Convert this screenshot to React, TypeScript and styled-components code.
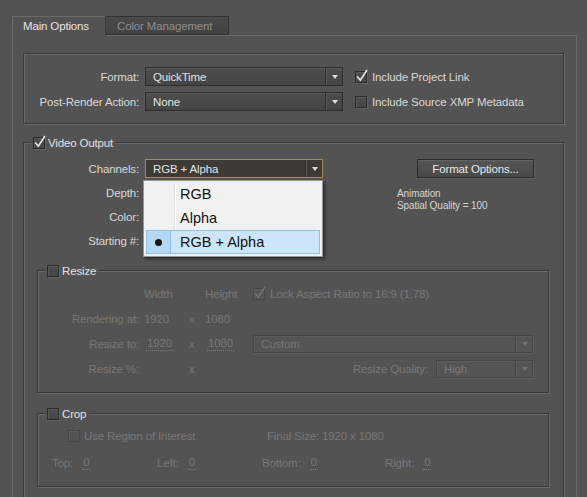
import React from "react";
import styled, { createGlobalStyle, css } from "styled-components";

const DARK = "#3a3a3a";
const LIGHT = "#6a6a6a";
const DIS = "#777777";

const GlobalStyle = createGlobalStyle`
  html, body { margin: 0; padding: 0; background: #535353; }
  body {
    font-family: "Liberation Sans", Arial, sans-serif;
    font-size: 11.5px;
    letter-spacing: -0.15px;
    color: #d8d8d8;
  }
  * { box-sizing: border-box; }
`;

const etched = css`
  border: 1px solid ${DARK};
  box-shadow: inset 1px 1px 0 ${LIGHT}, 1px 1px 0 ${LIGHT};
`;

const Page = styled.div`
  width: 587px;
  height: 497px;
  overflow: hidden;
  padding: 16px 10px 0 12px;
  display: flex;
  flex-direction: column;
`;

const TabBar = styled.div`
  display: flex;
  height: 19px;
`;

const Tab = styled.div<{ $active?: boolean }>`
  display: flex;
  align-items: center;
  white-space: nowrap;
  ${(p) =>
    p.$active
      ? css`
          position: relative;
          z-index: 1;
          width: 94px;
          height: 20px;
          padding: 0 0 1px 10px;
          background: #535353;
          border: 1px solid ${LIGHT};
          border-bottom: none;
          border-right-color: #3c3c3c;
          color: #e2e2e2;
        `
      : css`
          width: 123px;
          height: 19px;
          padding-left: 11px;
          background: linear-gradient(#4a4a4a, #424242);
          border: 1px solid #323232;
          border-left: none;
          color: #8e8e8e;
        `}
`;

const Panel = styled.div`
  flex: 1;
  border: 1px solid ${LIGHT};
  border-bottom: none;
  padding: 17px 12px 0 10px;
`;

const TopGroup = styled.div`
  ${etched};
  height: 71px;
  padding: 13px 0 12px 0;
  display: grid;
  grid-template-columns: 115px 198px auto;
  grid-auto-rows: 19px;
  column-gap: 6px;
  row-gap: 6px;
  align-items: center;
`;

const Label = styled.span<{ $dis?: boolean }>`
  text-align: right;
  white-space: nowrap;
  color: ${(p) => (p.$dis ? DIS : "#d8d8d8")};
`;

const Text = styled.span<{ $dis?: boolean }>`
  white-space: nowrap;
  color: ${(p) => (p.$dis ? DIS : "#d8d8d8")};
`;

/* ---------- select ---------- */
type SelState = "normal" | "focus" | "disabled";

const SelectBox = styled.div<{ $w: number; $h: number; $state: SelState }>`
  position: relative;
  width: ${(p) => p.$w}px;
  height: ${(p) => p.$h}px;
  display: flex;
  align-items: stretch;
  white-space: nowrap;
  ${(p) =>
    p.$state === "focus"
      ? css`
          border: 1px solid #a3895b;
          background: #3e3b37;
          color: #e4e4e4;
        `
      : p.$state === "disabled"
      ? css`
          border: 1px solid #474747;
          background: #545454;
          box-shadow: inset 1px 1px 0 #5c5c5c, 1px 1px 0 #5e5e5e;
          color: ${DIS};
        `
      : css`
          border: 1px solid #2f2f2f;
          background: linear-gradient(#4d4d4d, #454545);
          box-shadow: inset 0 1px 0 #595959;
          color: #e2e2e2;
        `}
`;

const SelectValue = styled.span`
  flex: 1;
  display: flex;
  align-items: center;
  padding-left: 7px;
  overflow: hidden;
`;

const ArrowCell = styled.span<{ $state: SelState }>`
  width: 17px;
  flex: none;
  display: flex;
  align-items: center;
  justify-content: center;
  border-left: 1px solid ${(p) => (p.$state === "disabled" ? "#474747" : "#2e2e2e")};
  box-shadow: inset 1px 0 0 ${(p) => (p.$state === "disabled" ? "#5c5c5c" : "#5a5a5a")};
`;

const Arrow = styled.span<{ $dis?: boolean }>`
  width: 0;
  height: 0;
  margin-left: 1px;
  border-left: 3.5px solid transparent;
  border-right: 3.5px solid transparent;
  border-top: 4px solid ${(p) => (p.$dis ? "#737373" : "#dedede")};
`;

function Select({
  width,
  value,
  state = "normal",
  h = 19,
}: {
  width: number;
  value: string;
  state?: SelState;
  h?: number;
}) {
  return (
    <SelectBox $w={width} $h={h} $state={state}>
      <SelectValue>{value}</SelectValue>
      <ArrowCell $state={state}>
        <Arrow $dis={state === "disabled"} />
      </ArrowCell>
    </SelectBox>
  );
}

/* ---------- checkbox ---------- */
const Box = styled.span<{ $dis?: boolean }>`
  position: relative;
  flex: none;
  width: 12px;
  height: 12px;
  border: 1px solid ${(p) => (p.$dis ? "#474747" : "#2c2c2c")};
  background: ${(p) => (p.$dis ? "#555555" : "linear-gradient(#4e4e4e, #464646)")};
  box-shadow: ${(p) =>
    p.$dis ? "inset 1px 1px 0 #5d5d5d" : "inset 1px 1px 0 #585858, 1px 1px 0 #626262"};
`;

const Tick = styled.svg`
  position: absolute;
  left: 0px;
  top: -3px;
  overflow: visible;
`;

function CheckBox({ checked, dis }: { checked?: boolean; dis?: boolean }) {
  return (
    <Box $dis={dis}>
      {checked && (
        <Tick width="12" height="13" viewBox="0 0 12 13">
          <path
            d="M1.2 7.6 L4.3 11.2 L11 1"
            fill="none"
            stroke={dis ? "#747474" : "#e8e8e8"}
            strokeWidth="1.6"
          />
        </Tick>
      )}
    </Box>
  );
}

const CheckRow = styled.span<{ $indent?: number }>`
  display: flex;
  align-items: center;
  gap: 5px;
  margin-left: ${(p) => p.$indent ?? 0}px;
  white-space: nowrap;
`;

/* ---------- group boxes ---------- */
const Group = styled.fieldset<{ $pad: string; $mt: number }>`
  ${etched};
  margin: ${(p) => p.$mt}px 0 0 0;
  padding: ${(p) => p.$pad};
  min-width: 0;
`;

const Legend = styled.legend<{ $x: number }>`
  margin-left: ${(p) => p.$x}px;
  height: 13px;
  padding: 0 3px 0 2px;
  display: flex;
  align-items: center;
  gap: 3px;
  background: #535353;
  color: #e2e2e2;
  white-space: nowrap;
`;

/* ---------- video output fields ---------- */
const FieldsArea = styled.div`
  display: flex;
  align-items: flex-start;
`;

const FieldGrid = styled.div`
  display: grid;
  grid-template-columns: 102px 178px;
  grid-auto-rows: 19px;
  column-gap: 6px;
  row-gap: 5px;
  align-items: center;
`;

const Anchor = styled.div`
  position: relative;
`;

const SideColumn = styled.div`
  margin-left: auto;
  margin-right: 15px;
  width: 137px;
  display: flex;
  flex-direction: column;
  align-items: flex-end;
`;

const Button = styled.button`
  width: 117px;
  height: 19px;
  padding: 0;
  font: inherit;
  letter-spacing: inherit;
  color: #e8e8e8;
  border: 1px solid #2c2c2c;
  background: linear-gradient(#565656, #484848);
  box-shadow: inset 0 1px 0 #626262, 1px 1px 0 #5e5e5e;
`;

const Info = styled.div`
  align-self: flex-start;
  margin-top: 10px;
  font-size: 10px;
  line-height: 12px;
  letter-spacing: -0.1px;
  color: #d6d6d6;
`;

const StartRow = styled.div`
  display: flex;
  align-items: center;
  gap: 5px;
  white-space: nowrap;
`;

const FieldValue = styled.span<{ $w: number }>`
  width: ${(p) => p.$w}px;
  height: 17px;
  border-bottom: 1px dotted #8a8a8a;
`;

/* ---------- dropdown menu ---------- */
const Menu = styled.div`
  position: absolute;
  z-index: 5;
  left: -2px;
  top: calc(100% + 2px);
  width: 180px;
  padding: 1px 0 2px 2px;
  background: #f1f1f1;
  border: 1px solid #979797;
  box-shadow: 2px 2px 3px rgba(0, 0, 0, 0.5);
  font-size: 14.5px;
  letter-spacing: 0;
  color: #111111;
`;

const MenuItem = styled.div<{ $sel?: boolean }>`
  height: 24px;
  margin-right: 2px;
  display: flex;
  align-items: stretch;
  border: 1px solid ${(p) => (p.$sel ? "#8fc1e9" : "transparent")};
  background: ${(p) => (p.$sel ? "#cde5f8" : "transparent")};
`;

const Gutter = styled.span<{ $sel?: boolean }>`
  width: 24px;
  flex: none;
  display: flex;
  align-items: center;
  justify-content: center;
  background: ${(p) => (p.$sel ? "#b4d7f3" : "transparent")};
  border-right: 1px solid ${(p) => (p.$sel ? "#8fc1e9" : "transparent")};
`;

const Bullet = styled.span`
  width: 7px;
  height: 7px;
  border-radius: 50%;
  background: #151515;
`;

const ItemText = styled.span<{ $sel?: boolean }>`
  flex: 1;
  display: flex;
  align-items: center;
  margin-left: 3px;
  padding-left: 5px;
  border-left: 1px solid ${(p) => (p.$sel ? "transparent" : "#dedede")};
  box-shadow: ${(p) => (p.$sel ? "none" : "inset 1px 0 0 #ffffff")};
`;

/* ---------- resize ---------- */
const ResizeGrid = styled.div`
  display: grid;
  grid-template-columns: 101px 40px 11px 43px 280px;
  grid-auto-rows: 18px;
  column-gap: 5px;
  row-gap: 7px;
  align-items: center;
  color: ${DIS};
`;

const Dotted = styled.span`
  justify-self: start;
  margin-left: 2px;
  padding: 0 1px;
  line-height: 13px;
  border-bottom: 1px dotted #7c7c7c;
  color: ${DIS};
`;

const QualityCell = styled.div`
  display: flex;
  align-items: center;
  justify-content: flex-end;
  gap: 8px;
`;

/* ---------- crop ---------- */
const CropTop = styled.div`
  height: 18px;
  display: flex;
  align-items: center;
`;

const CropCheck = styled.div`
  width: 199px;
  margin-left: 16px;
  display: flex;
  align-items: center;
  gap: 4px;
`;

const CropGrid = styled.div`
  margin-top: 9px;
  height: 18px;
  display: grid;
  grid-template-columns: 105px 105px 123px 1fr;
  align-items: center;
`;

const CropCell = styled.div`
  display: flex;
  align-items: center;
  gap: 7px;
  color: ${DIS};
`;

export default function App() {
  return (
    <>
      <GlobalStyle />
      <Page>
        <TabBar>
          <Tab $active>Main Options</Tab>
          <Tab>Color Management</Tab>
        </TabBar>
        <Panel>
          <TopGroup>
            <Label>Format:</Label>
            <Select width={198} value="QuickTime" />
            <CheckRow $indent={6}>
              <CheckBox checked />
              <Text>Include Project Link</Text>
            </CheckRow>
            <Label>Post-Render Action:</Label>
            <Select width={198} value="None" />
            <CheckRow $indent={6}>
              <CheckBox />
              <Text>Include Source XMP Metadata</Text>
            </CheckRow>
          </TopGroup>

          <Group $mt={12} $pad="10px 14px 20px 13px">
            <Legend $x={-6}>
              <CheckBox checked />
              <span>Video Output</span>
            </Legend>
            <FieldsArea>
              <FieldGrid>
                <Label>Channels:</Label>
                <Anchor>
                  <Select width={178} value="RGB + Alpha" state="focus" />
                  <Menu>
                    <MenuItem>
                      <Gutter />
                      <ItemText>RGB</ItemText>
                    </MenuItem>
                    <MenuItem>
                      <Gutter />
                      <ItemText>Alpha</ItemText>
                    </MenuItem>
                    <MenuItem $sel>
                      <Gutter $sel>
                        <Bullet />
                      </Gutter>
                      <ItemText $sel>RGB + Alpha</ItemText>
                    </MenuItem>
                  </Menu>
                </Anchor>
                <Label>Depth:</Label>
                <Select width={170} value="" />
                <Label>Color:</Label>
                <Select width={170} value="" />
                <Label>Starting #:</Label>
                <StartRow>
                  <FieldValue $w={36} />
                  <CheckBox dis />
                  <Text $dis>Use Comp Frame Number</Text>
                </StartRow>
              </FieldGrid>
              <SideColumn>
                <Button>Format Options...</Button>
                <Info>
                  Animation
                  <br />
                  Spatial Quality = 100
                </Info>
              </SideColumn>
            </FieldsArea>

            <Group $mt={14} $pad="8px 15px 14px 0">
              <Legend $x={7}>
                <CheckBox />
                <span>Resize</span>
              </Legend>
              <ResizeGrid>
                <span />
                <Text $dis>Width</Text>
                <span />
                <Text $dis>Height</Text>
                <CheckRow>
                  <CheckBox checked dis />
                  <Text $dis>Lock Aspect Ratio to 16:9 (1.78)</Text>
                </CheckRow>

                <Label $dis>Rendering at:</Label>
                <Text $dis>1920</Text>
                <Text $dis>x</Text>
                <Text $dis>1080</Text>
                <span />

                <Label $dis>Resize to:</Label>
                <Dotted>1920</Dotted>
                <Text $dis>x</Text>
                <Dotted>1080</Dotted>
                <Select width={280} h={18} value="Custom" state="disabled" />

                <Label $dis>Resize %:</Label>
                <span />
                <Text $dis>x</Text>
                <span />
                <QualityCell>
                  <Text $dis>Resize Quality:</Text>
                  <Select width={97} h={18} value="High" state="disabled" />
                </QualityCell>
              </ResizeGrid>
            </Group>

            <Group $mt={14} $pad="7px 15px 14px 14px">
              <Legend $x={-7}>
                <CheckBox />
                <span>Crop</span>
              </Legend>
              <CropTop>
                <CropCheck>
                  <CheckBox dis />
                  <Text $dis>Use Region of Interest</Text>
                </CropCheck>
                <Text $dis>Final Size: 1920 x 1080</Text>
              </CropTop>
              <CropGrid>
                <CropCell>
                  <span>Top:</span>
                  <Dotted>0</Dotted>
                </CropCell>
                <CropCell>
                  <span>Left:</span>
                  <Dotted>0</Dotted>
                </CropCell>
                <CropCell>
                  <span>Bottom:</span>
                  <Dotted>0</Dotted>
                </CropCell>
                <CropCell>
                  <span>Right:</span>
                  <Dotted>0</Dotted>
                </CropCell>
              </CropGrid>
            </Group>
          </Group>
        </Panel>
      </Page>
    </>
  );
}
